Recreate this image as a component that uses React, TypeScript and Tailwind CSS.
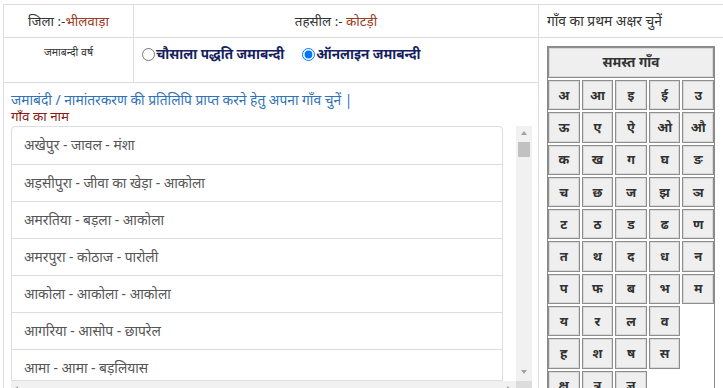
const letterRows: string[][] = [
  ["अ", "आ", "इ", "ई", "उ"],
  ["ऊ", "ए", "ऐ", "ओ", "औ"],
  ["क", "ख", "ग", "घ", "ङ"],
  ["च", "छ", "ज", "झ", "ञ"],
  ["ट", "ठ", "ड", "ढ", "ण"],
  ["त", "थ", "द", "ध", "न"],
  ["प", "फ", "ब", "भ", "म"],
  ["य", "र", "ल", "व"],
  ["ह", "श", "ष", "स"],
  ["क्ष", "त्र", "ज्ञ"],
];

const villages = [
  "अखेपुर - जावल - मंशा",
  "अड़सीपुरा - जीवा का खेड़ा - आकोला",
  "अमरतिया - बड़ला - आकोला",
  "अमरपुरा - कोठाज - पारोली",
  "आकोला - आकोला - आकोला",
  "आगरिया - आसोप - छापरेल",
  "आमा - आमा - बड़लियास",
  "आमली - आमली - आमली",
  "आसोप - आसोप - आसोप",
];

function LetterButton({ label }: { label: string }) {
  return (
    <button className="h-[30.3px] border border-[#8d8d8d] bg-[#efefef] shadow-[inset_0_0_0_1px_#d9d9d9] text-[13px] font-bold text-[#333] leading-none">
      {label}
    </button>
  );
}

function Arrow({ dir }: { dir: "up" | "down" | "left" | "right" }) {
  const points = {
    up: "4,1 7,5 1,5",
    down: "1,1 7,1 4,5",
    left: "1,4 5,1 5,7",
    right: "1,1 5,4 1,7",
  }[dir];
  return (
    <svg width="8" height="8" viewBox="0 0 8 8">
      <polygon points={points} fill="#a3a3a3" />
    </svg>
  );
}

export default function App() {
  return (
    <div className="min-h-screen bg-white pl-[3px] pt-[4px] font-['Noto_Sans',sans-serif] text-[#333]">
      <div className="grid w-[722px] grid-cols-[130px_405px_187px] grid-rows-[33px_45px_auto] border-l border-t border-[#dddddd]">
        {/* header row */}
        <div className="flex items-center justify-center border-b border-r border-[#dddddd] text-[13.4px]">
          जिला :-<span className="text-[#9a3a22]">भीलवाड़ा</span>
        </div>
        <div className="flex items-center justify-center border-b border-r border-[#dddddd] text-[13.4px]">
          तहसील :-&nbsp;<span className="text-[#9a3a22]">कोटड़ी</span>
        </div>
        <div className="flex items-center border-b border-r border-[#dddddd] pl-[8px] text-[13.8px]">
          गाँव का प्रथम अक्षर चुनें
        </div>

        {/* year row */}
        <div className="flex justify-center border-b border-r border-[#dddddd] pt-[7px] text-[10.5px]">
          जमाबन्दी वर्ष
        </div>
        <div className="flex items-start gap-[18px] border-b border-r border-[#dddddd] pl-[8px] pt-[6px] text-[13.5px] font-bold text-[#14215e]">
          <label className="flex items-center">
            <input type="radio" name="jamabandi" className="m-0 mr-px h-[13px] w-[13px]" />
            चौसाला पद्धति जमाबन्दी
          </label>
          <label className="flex items-center">
            <input type="radio" name="jamabandi" defaultChecked className="m-0 mr-px h-[13px] w-[13px]" />
            ऑनलाइन जमाबन्दी
          </label>
        </div>

        {/* alphabet picker */}
        <div className="row-span-2 border-r border-[#dddddd] pl-[8px] pt-[8px]">
          <div className="w-[168px] border border-[#8a8a8a] bg-white">
            <button className="h-[31px] w-full border border-[#8d8d8d] bg-[#efefef] shadow-[inset_0_0_0_1px_#d9d9d9] text-[13.5px] font-bold text-[#333]">
              समस्त गाँव
            </button>
            <div className="mt-[2px] flex flex-col gap-[2px]">
              {letterRows.map((row, r) => (
                <div key={r} className="grid grid-cols-5 gap-[2px]">
                  {row.map((l) => (
                    <LetterButton key={l} label={l} />
                  ))}
                </div>
              ))}
            </div>
          </div>
        </div>

        {/* village list */}
        <div className="col-span-2 border-r border-[#dddddd] pl-[7px] pt-[8px]">
          <p className="text-[13.8px] leading-[17px] text-[#2f72b8]">
            जमाबंदी / नामांतरकरण की प्रतिलिपि प्राप्त करने हेतु अपना गाँव चुनें |
          </p>
          <p className="text-[13.4px] leading-[17px] text-[#8b1c12]">गाँव का नाम</p>
          <div className="mt-px w-[521px]">
            <div className="flex h-[255px] overflow-hidden">
              <ul className="w-[492px] shrink-0 rounded-t-[4px] border border-[#dddddd]">
                {villages.map((v, i) => (
                  <li
                    key={v}
                    className={`flex h-[37px] items-center pl-[12px] text-[13.8px] text-[#555] ${
                      i > 0 ? "border-t border-[#dddddd]" : ""
                    }`}
                  >
                    {v}
                  </li>
                ))}
              </ul>
              <div className="ml-auto flex w-[16px] flex-col items-center bg-[#f1f1f1]">
                <div className="flex h-[16px] items-center justify-center">
                  <Arrow dir="up" />
                </div>
                <div className="h-[15px] w-[12px] bg-[#c1c1c1]" />
                <div className="flex-1" />
                <div className="flex h-[16px] items-center justify-center">
                  <Arrow dir="down" />
                </div>
              </div>
            </div>
            <div className="flex h-[16px]">
              <div className="flex flex-1 items-center justify-between bg-[#f1f1f1] px-[2px]">
                <Arrow dir="left" />
                <Arrow dir="right" />
              </div>
              <div className="w-[16px] bg-[#dcdcdc]" />
            </div>
          </div>
        </div>
      </div>
    </div>
  );
}
